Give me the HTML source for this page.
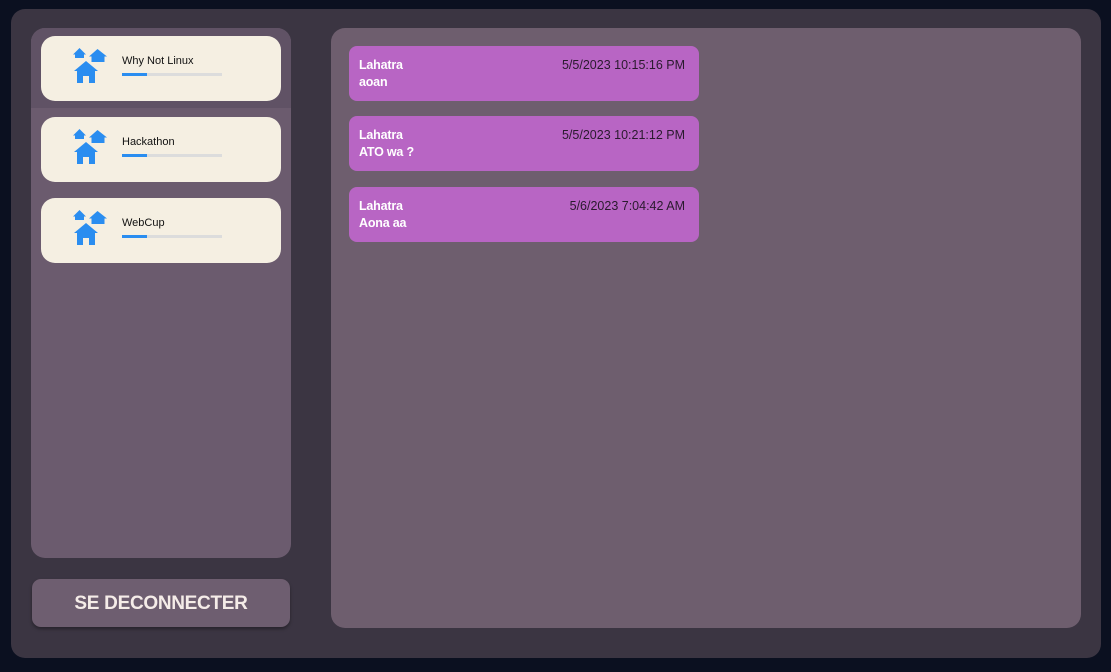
<!DOCTYPE html>
<html><head><meta charset="utf-8"><style>
*{margin:0;padding:0;box-sizing:border-box}
body{width:1111px;height:672px;background:#0b1020;position:relative;overflow:hidden;font-family:"Liberation Sans",sans-serif}
.dlg{position:absolute;left:11px;top:9px;width:1090px;height:649px;background:#3b3542;border-radius:14px}
.lp{position:absolute;left:31px;top:28px;width:260px;height:530px;background:#6b5b6e;border-radius:14px;overflow:hidden}
.sel{position:absolute;left:0;top:0;width:260px;height:80px;background:#605265}
.card{position:absolute;left:41px;width:240px;height:65px;background:#f5efe2;border-radius:14px}
.card .t{position:absolute;left:81px;top:19px;font-size:11px;color:#111}
.card .bar{position:absolute;left:81px;top:37px;width:100px;height:3px;background:#dcdcdc}
.card .bar i{display:block;width:25px;height:3px;background:#2a8df0}
.card svg{position:absolute;left:32px;top:12px}
.btn{position:absolute;left:32px;top:579px;width:258px;height:48px;background:#6e5e70;border-radius:9px;box-shadow:0 2px 3px rgba(0,0,0,.35);color:#f5ece8;font-weight:bold;font-size:19px;text-align:center;line-height:50px;letter-spacing:-0.3px}
.rp{position:absolute;left:331px;top:28px;width:750px;height:600px;background:#6e5e6e;border-radius:14px}
.msg{position:absolute;left:349px;width:350px;height:55px;background:#b865c4;border-radius:8px}
.msg .n{position:absolute;left:10px;top:12px;font-size:12.5px;font-weight:bold;color:#fff;letter-spacing:-0.2px}
.msg .d{position:absolute;right:14px;top:12px;font-size:12.5px;color:#2a1a2e}
.msg .b{position:absolute;left:10px;top:29px;font-size:12.5px;font-weight:bold;color:#fff;letter-spacing:-0.2px}
</style></head><body>
<div class="dlg"></div>
<div class="lp"><div class="sel"></div></div>
<div class="card" style="top:36px"><svg width="36" height="36" viewBox="0 0 36 36" fill="#2a8df0"><path d="M0 6.5 L6.5 0 L13 6.5 L11 6.5 L11 10 L2 10 L2 6.5Z"/><path d="M16 8.5 L24.5 1 L34 8.5 L31.5 8.5 L31.5 14 L18.5 14 L18.5 8.5Z"/><path d="M1 23 L13 13 L25 23 L22 23 L22 35 L16 35 L16 28 L10 28 L10 35 L4 35 L4 23Z"/></svg><div class="t">Why Not Linux</div><div class="bar"><i></i></div></div>
<div class="card" style="top:117px"><svg width="36" height="36" viewBox="0 0 36 36" fill="#2a8df0"><path d="M0 6.5 L6.5 0 L13 6.5 L11 6.5 L11 10 L2 10 L2 6.5Z"/><path d="M16 8.5 L24.5 1 L34 8.5 L31.5 8.5 L31.5 14 L18.5 14 L18.5 8.5Z"/><path d="M1 23 L13 13 L25 23 L22 23 L22 35 L16 35 L16 28 L10 28 L10 35 L4 35 L4 23Z"/></svg><div class="t">Hackathon</div><div class="bar"><i></i></div></div>
<div class="card" style="top:198px"><svg width="36" height="36" viewBox="0 0 36 36" fill="#2a8df0"><path d="M0 6.5 L6.5 0 L13 6.5 L11 6.5 L11 10 L2 10 L2 6.5Z"/><path d="M16 8.5 L24.5 1 L34 8.5 L31.5 8.5 L31.5 14 L18.5 14 L18.5 8.5Z"/><path d="M1 23 L13 13 L25 23 L22 23 L22 35 L16 35 L16 28 L10 28 L10 35 L4 35 L4 23Z"/></svg><div class="t">WebCup</div><div class="bar"><i></i></div></div>
<div class="btn">SE DECONNECTER</div>
<div class="rp"></div>
<div class="msg" style="top:46px"><div class="n">Lahatra</div><div class="d">5/5/2023 10:15:16 PM</div><div class="b">aoan</div></div>
<div class="msg" style="top:116px"><div class="n">Lahatra</div><div class="d">5/5/2023 10:21:12 PM</div><div class="b">ATO wa ?</div></div>
<div class="msg" style="top:187px"><div class="n">Lahatra</div><div class="d">5/6/2023 7:04:42 AM</div><div class="b">Aona aa</div></div>
</body></html>
